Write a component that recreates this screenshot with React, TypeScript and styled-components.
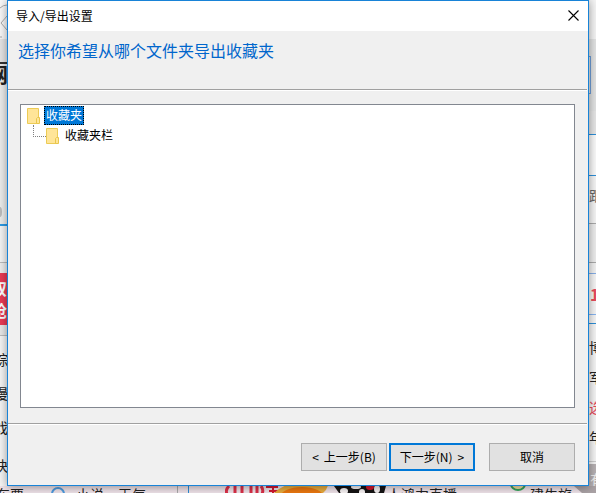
import React from "react";
import styled, { createGlobalStyle } from "styled-components";

const GlobalStyle = createGlobalStyle`
  * { box-sizing: border-box; }
  body {
    margin: 0;
    background: #ececec;
    color: #000;
    font: 12px/16px "Noto Sans CJK SC", sans-serif;
  }
`;

const Screen = styled.div`
  display: grid;
  grid-template-columns: 7px minmax(0, 1fr) 7px;
  grid-template-rows: minmax(0, 1fr) 7px;
  height: 100vh;
  overflow: hidden;
`;

const Edge = styled.div`
  display: flex;
  flex-direction: column;
  min-width: 0;
  overflow: hidden;
`;

const Band = styled.div<{ $h: number; $bg?: string; $line?: string; $thick?: number }>`
  flex: none;
  display: flex;
  align-items: center;
  height: ${(p) => p.$h}px;
  overflow: hidden;
  background: ${(p) => p.$bg ?? "#f5f5f5"};
  border-top: ${(p) => (p.$line ? `${p.$thick ?? 1}px solid ${p.$line}` : "0")};
`;

const PageText = styled.span<{ $color?: string; $size?: number; $shift?: number; $bold?: boolean }>`
  flex: none;
  white-space: nowrap;
  color: ${(p) => p.$color ?? "#222"};
  font-size: ${(p) => p.$size ?? 14}px;
  font-weight: ${(p) => (p.$bold ? 700 : 400)};
  line-height: 16px;
  margin-left: ${(p) => p.$shift ?? 0}px;
`;

const Banner = styled(Band)`
  flex-direction: column;
  align-items: flex-start;
  justify-content: space-evenly;
`;

const FieldEnd = styled.div`
  width: 2px;
  height: 38px;
  border: 1px solid #6f9fd8;
  border-left: 0;
`;

const Dialog = styled.main`
  z-index: 1;
  display: flex;
  flex-direction: column;
  border: 1px solid #1883d7;
  background: #f0f0f0;
  box-shadow: 0 1px 9px rgba(0, 0, 0, 0.4);
`;

const TitleBar = styled.header`
  flex: none;
  display: flex;
  align-items: center;
  justify-content: space-between;
  height: 30px;
  padding-left: 8px;
  background: #fff;
`;

const Title = styled.span`
  line-height: 16px;
`;

const CloseButton = styled.button`
  display: flex;
  align-items: center;
  justify-content: center;
  width: 30px;
  height: 28px;
  padding: 0 0 1px;
  border: 0;
  background: transparent;
`;

const Heading = styled.h1`
  flex: none;
  height: 58px;
  margin: 0;
  padding: 7px 10px;
  color: #0066cc;
  font-size: 16px;
  font-weight: 400;
  line-height: 24px;
`;

const Divider = styled.hr`
  flex: none;
  height: 2px;
  margin: 0 1px 0 0;
  border: 0;
  border-top: 1px solid #a0a0a0;
  background: #fff;
`;

const Tree = styled.ul`
  flex: 1;
  min-height: 0;
  margin: 13px 13px 15px 12px;
  padding: 0 6px;
  border: 1px solid #828790;
  background: #fff;
  list-style: none;
`;

const Branch = styled.ul`
  margin: 0;
  padding: 0 0 0 6px;
  list-style: none;
`;

const TreeRow = styled.div`
  display: flex;
  align-items: center;
  height: 20px;
  padding-top: 1px;
`;

const FolderLabel = styled.span<{ $selected?: boolean }>`
  margin-left: 3px;
  padding: 0 1px 1px;
  border: 1px dotted ${(p) => (p.$selected ? "#ff8728" : "transparent")};
  outline: ${(p) => (p.$selected ? "1px dotted #000" : "0")};
  outline-offset: -1px;
  background: ${(p) => (p.$selected ? "#0078d7" : "transparent")};
  color: ${(p) => (p.$selected ? "#fff" : "#000")};
  line-height: 16px;
`;

const Connector = styled.span`
  width: 13px;
  height: 12px;
  margin-bottom: 10px;
  border-left: 1px dotted #808080;
  border-bottom: 1px dotted #808080;
`;

const Footer = styled.footer`
  flex: none;
  display: flex;
  justify-content: flex-end;
  height: 60px;
  padding: 18px 13px 14px;
`;

const PushButton = styled.button<{ $primary?: boolean; $gap: number }>`
  display: flex;
  align-items: center;
  justify-content: center;
  gap: 5px;
  width: 86px;
  height: 28px;
  margin-left: ${(p) => p.$gap}px;
  padding: 0 0 1px;
  border: ${(p) => (p.$primary ? "2px solid #0078d7" : "1px solid #adadad")};
  background: #e1e1e1;
  color: #000;
  font: inherit;
  white-space: nowrap;
`;

const BottomEdge = styled.div`
  grid-column: 1 / -1;
  display: flex;
  align-items: flex-start;
  overflow: hidden;
  background: #efe3e9;
`;

const Rule = styled.span<{ $color: string; $shift: number }>`
  flex: none;
  width: 1px;
  height: 7px;
  margin-left: ${(p) => p.$shift}px;
  background: ${(p) => p.$color};
`;

const Ring = styled.span`
  flex: none;
  width: 14px;
  height: 14px;
  margin: 1px 0 0 27px;
  border: 2px solid #4d9be0;
  border-radius: 50%;
`;

const Art = styled.svg<{ $shift?: number }>`
  flex: none;
  display: block;
  margin-left: ${(p) => p.$shift ?? 0}px;
`;

const Folder = () => (
  <svg width="14" height="16" viewBox="0 0 14 16" aria-hidden="true">
    <path d="M.5.5h11v15H.5z" fill="#ffe598" stroke="#eccb55" />
    <path d="M10.5 9.5h2v6h-3v-5z" fill="#ffe598" stroke="#e9c64b" />
  </svg>
);

export default function App() {
  return (
    <>
      <GlobalStyle />
      <Screen>
        <Edge aria-hidden="true">
          <Band $h={39} $bg="#f8f8f8">
            <Art width="7" height="39" viewBox="0 0 7 39" fill="none" stroke="#aaa">
              <path d="M0 8Q3 5 7 5M7 16L1 23l6 7M0 37h2" />
            </Art>
          </Band>
          <Band $h={23} $bg="#e5e5e5" />
          <Band $h={24} $bg="#ececec" $line="#333" $thick={2}>
            <PageText $size={20} $shift={-12} $bold>网</PageText>
          </Band>
          <Band $h={114} $bg="#ecedec" />
          <Band $h={24} $bg="#ecedec">
            <Art width="7" height="20" viewBox="0 0 7 20">
              <ellipse cx="0" cy="10" rx="2" ry="5" fill="#bbb" />
            </Art>
          </Band>
          <Band $h={38} $line="#2d9be5" $thick={2} />
          <Band $h={11} $line="#bbb" $bg="#eee" />
          <Banner $h={52} $bg="#e93a55">
            <PageText $color="#fff" $size={16} $shift={-9} $bold>双</PageText>
            <PageText $color="#fff" $size={16} $shift={-9} $bold>抢</PageText>
          </Banner>
          <Band $h={10} $bg="#e8e8e8" />
          <Band $h={7} $line="#bbb" />
          <Band $h={34}><PageText $shift={-6}>综</PageText></Band>
          <Band $h={34}><PageText $shift={-6}>漫</PageText></Band>
          <Band $h={34}><PageText $shift={-6}>戏</PageText></Band>
          <Band $h={42}><PageText $shift={-6}>快</PageText></Band>
        </Edge>

        <Dialog role="dialog" aria-labelledby="dialog-title">
          <TitleBar>
            <Title id="dialog-title">导入/导出设置</Title>
            <CloseButton type="button" aria-label="关闭">
              <svg width="11" height="11" viewBox="0 0 11 11" stroke="#000" strokeWidth="1.1">
                <path d="M.5.5l10 10M10.5.5l-10 10" />
              </svg>
            </CloseButton>
          </TitleBar>
          <Heading>选择你希望从哪个文件夹导出收藏夹</Heading>
          <Divider />
          <Tree role="tree" aria-label="收藏夹">
            <li role="treeitem" aria-selected="true" aria-expanded="true">
              <TreeRow>
                <Folder />
                <FolderLabel $selected>收藏夹</FolderLabel>
              </TreeRow>
              <Branch role="group">
                <li role="treeitem" aria-selected="false">
                  <TreeRow>
                    <Connector />
                    <Folder />
                    <FolderLabel>收藏夹栏</FolderLabel>
                  </TreeRow>
                </li>
              </Branch>
            </li>
          </Tree>
          <Divider />
          <Footer>
            <PushButton type="button" $gap={0}><span>&lt;</span><span>上一步(B)</span></PushButton>
            <PushButton type="button" $gap={2} $primary><span>下一步(N)</span><span>&gt;</span></PushButton>
            <PushButton type="button" $gap={14}>取消</PushButton>
          </Footer>
        </Dialog>

        <Edge aria-hidden="true">
          <Band $h={39} $bg="#f4f4f4" />
          <Band $h={72} $bg="#e2e3e3"><FieldEnd /></Band>
          <Band $h={23} $bg="#e6e6e6" />
          <Band $h={41} $bg="#fafafa" $line="#2d8fd8" />
          <Band $h={39} $line="#2d8fd8"><PageText $color="#666">跟</PageText></Band>
          <Band $h={9} />
          <Band $h={39} $bg="#ededed" $line="#aaa" />
          <Band $h={11} $bg="#f2f2f2" $line="#aaa" />
          <Band $h={41} $line="#86aee6"><PageText $color="#e74a5c" $size={16} $shift={1} $bold>1</PageText></Band>
          <Band $h={9} $line="#86b4f0" />
          <Band $h={9} $line="#2d8fd8" />
          <Band $h={30}><PageText>博</PageText></Band>
          <Band $h={30}><PageText>军</PageText></Band>
          <Band $h={30}><PageText $color="#e74a5c">选</PageText></Band>
          <Band $h={30}><PageText>年</PageText></Band>
          <Band $h={9} />
          <Band $h={3} $line="#ccc" />
          <Band $h={29} $bg="#b7b1b3"><PageText $color="#eee" $shift={1}>有</PageText></Band>
        </Edge>

        <BottomEdge aria-hidden="true">
          <PageText $shift={-4}>车票</PageText>
          <Ring />
          <PageText $shift={11}>小说</PageText>
          <PageText $shift={14}>天气</PageText>
          <Rule $color="#aaa" $shift={31} />
          <Rule $color="#2d8fd8" $shift={10} />
          <Art $shift={36} width="164" height="7" viewBox="0 0 164 7">
            <g stroke="#dc3048" strokeWidth="3" fill="none">
              <path d="M4 0Q0 4 2 8M10 0v7M17 0v7M26 0v7M32 0v7M36 0q3 4 1 8" />
              <path d="M41 1h12M44 5h12M48 0v7" stroke="#d21931" strokeWidth="2" />
            </g>
            <path d="M49 7Q62-5 76-1h27q-1 5-5 8z" fill="#e8ac3e" />
            <ellipse cx="77" cy="11" rx="22" ry="10" fill="#ec780f" />
            <path d="M109 0h52l-2 7h-45z" fill="#161414" />
            <g fill="#f8f3f4">
              <ellipse cx="119" cy="5" rx="4" ry="3" />
              <ellipse cx="131" cy="1" rx="5" ry="2" />
              <ellipse cx="137" cy="6" rx="3" ry="3" />
              <ellipse cx="152" cy="3" rx="3" ry="4" />
            </g>
            <ellipse cx="145" cy="1" rx="4" ry="3" fill="#d5152a" />
          </Art>
          <PageText $shift={-2}>人鸿力直播</PageText>
          <Art $shift={52} width="18" height="7" viewBox="0 0 18 7">
            <ellipse cx="9" cy="-2" rx="7" ry="6" fill="#f2dda1" stroke="#35a35b" strokeWidth="2" />
          </Art>
          <PageText $shift={3}>建牛旅</PageText>
          <Art width="32" height="7" viewBox="0 0 32 7">
            <path d="M2 0h30v7H10z" fill="#aaa2a5" />
          </Art>
        </BottomEdge>
      </Screen>
    </>
  );
}
